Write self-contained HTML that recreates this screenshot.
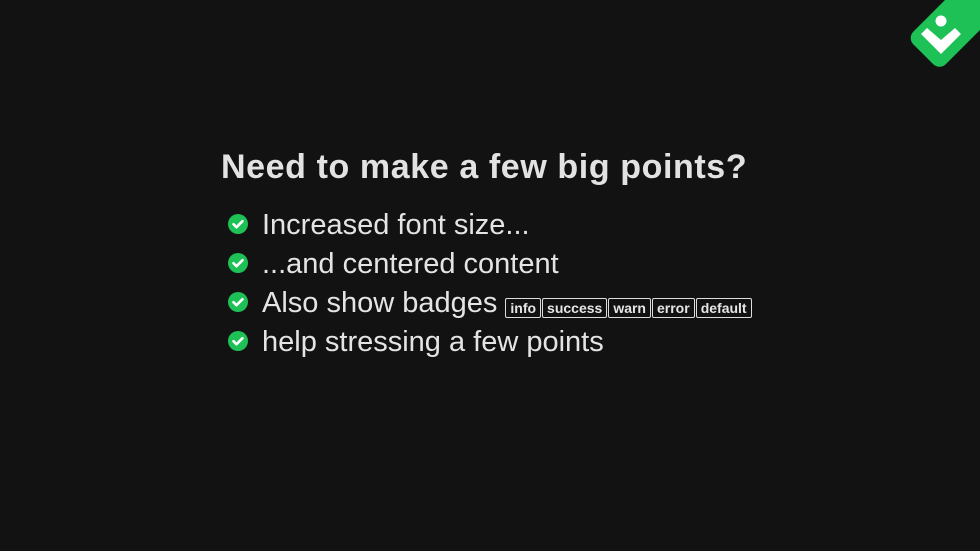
<!DOCTYPE html>
<html><head><meta charset="utf-8"><style>
html,body{margin:0;padding:0;background:#121212;width:980px;height:551px;overflow:hidden;font-family:"Liberation Sans",sans-serif;color:#e4e4e4}
.logo{position:absolute;left:0;top:0}
h1{position:absolute;left:221px;top:145px;margin:0;font-size:34px;font-weight:bold;line-height:44px;letter-spacing:0.6px;color:#e2e2e2;white-space:nowrap}
.item{position:absolute;left:228px;height:39px;line-height:39px;font-size:29px;white-space:nowrap;color:#e4e4e4}
.item svg{position:absolute;left:0;top:8px}
.item span.t{position:absolute;left:34px;top:0}
.badges{display:inline-block;vertical-align:middle;margin-left:8px;position:relative;top:0px}
.b{display:inline-block;border:1px solid #ddd;border-radius:2px;font-size:14px;font-weight:bold;line-height:18px;padding:0 4px;margin-right:1px;color:#e6e6e6}
</style></head><body>
<svg class="logo" width="980" height="80" viewBox="0 0 980 80">
<g transform="translate(907,38) rotate(-45)"><rect x="0" y="0" width="130" height="46" rx="9" fill="#1ec155"/></g>
<circle cx="941" cy="21" r="5.5" fill="#fff"/>
<polygon points="921,34 927,28 941,40 955,28 961,34 941,54" fill="#fff"/>
</svg>
<h1>Need to make a few big points?</h1>
<div class="item" style="top:206px"><svg width="20" height="20" viewBox="0 0 20 20"><circle cx="10" cy="10" r="10" fill="#1ec155"/><path d="M5.5 10.2l3 3 6-6" stroke="#fff" stroke-width="2.6" fill="none" stroke-linecap="round" stroke-linejoin="round"/></svg><span class="t">Increased font size...</span></div>
<div class="item" style="top:245px"><svg width="20" height="20" viewBox="0 0 20 20"><circle cx="10" cy="10" r="10" fill="#1ec155"/><path d="M5.5 10.2l3 3 6-6" stroke="#fff" stroke-width="2.6" fill="none" stroke-linecap="round" stroke-linejoin="round"/></svg><span class="t">...and centered content</span></div>
<div class="item" style="top:284px"><svg width="20" height="20" viewBox="0 0 20 20"><circle cx="10" cy="10" r="10" fill="#1ec155"/><path d="M5.5 10.2l3 3 6-6" stroke="#fff" stroke-width="2.6" fill="none" stroke-linecap="round" stroke-linejoin="round"/></svg><span class="t">Also show badges<span class="badges"><span class="b">info</span><span class="b">success</span><span class="b">warn</span><span class="b">error</span><span class="b">default</span></span></span></div>
<div class="item" style="top:323px"><svg width="20" height="20" viewBox="0 0 20 20"><circle cx="10" cy="10" r="10" fill="#1ec155"/><path d="M5.5 10.2l3 3 6-6" stroke="#fff" stroke-width="2.6" fill="none" stroke-linecap="round" stroke-linejoin="round"/></svg><span class="t">help stressing a few points</span></div>
</body></html>
